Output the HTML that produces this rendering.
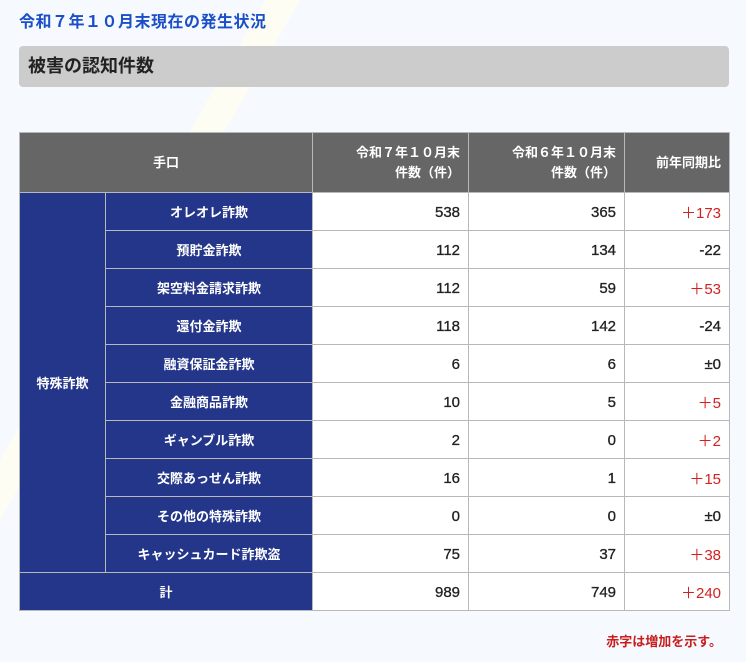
<!DOCTYPE html>
<html><head><meta charset="utf-8"><style>
body{margin:0;width:746px;height:662px;overflow:hidden;background:#f6f9fd;font-family:"Liberation Sans","Noto Sans CJK JP",sans-serif;position:relative}
.stripe{position:absolute;left:0;top:0;width:746px;height:662px;background:linear-gradient(120deg,transparent 0,transparent 230px,#fdfdf3 230px,#fdfdf3 260px,transparent 260px)}
h1{position:absolute;left:19px;top:8px;margin:0;font-size:16px;font-weight:bold;color:#1a4fc7;letter-spacing:0.5px}
.bar{position:absolute;left:19px;top:46px;width:710px;height:41px;background:#cccccc;border-radius:4px;font-size:18px;font-weight:bold;color:#222;line-height:41px;box-sizing:border-box;padding-left:9px}
table{position:absolute;left:19px;top:132px;border-collapse:collapse;width:710px;table-layout:fixed;font-size:14px;font-weight:bold}
td,th{border:1px solid #b8b8b8;padding:0 8px;height:38px;box-sizing:border-box}
th{background:#666;color:#fff;font-size:13px;height:60px;text-align:right;line-height:20px}
th.c{text-align:center}
.n{background:#24368a;color:#fff;text-align:center;font-size:13px}
.v{background:#fff;text-align:right;color:#222;font-size:15px;font-weight:normal;-webkit-text-stroke:0.3px #222;padding-top:2px}
.r{color:#d42020;-webkit-text-stroke:0}
.note{position:absolute;right:24px;top:631px;color:#c81e1e;font-size:13px;font-weight:bold}
</style></head><body>
<div class="stripe"></div>
<h1>令和７年１０月末現在の発生状況</h1>
<div class="bar">被害の認知件数</div>
<table>
<colgroup><col style="width:86px"><col style="width:207px"><col style="width:156px"><col style="width:156px"><col style="width:105px"></colgroup>
<tr><th class="c" colspan="2">手口</th><th>令和７年１０月末<br>件数（件）</th><th>令和６年１０月末<br>件数（件）</th><th>前年同期比</th></tr>
<tr><td class="n" rowspan="10">特殊詐欺</td><td class="n">オレオレ詐欺</td><td class="v">538</td><td class="v">365</td><td class="v r">＋173</td></tr>
<tr><td class="n">預貯金詐欺</td><td class="v">112</td><td class="v">134</td><td class="v">-22</td></tr>
<tr><td class="n">架空料金請求詐欺</td><td class="v">112</td><td class="v">59</td><td class="v r">＋53</td></tr>
<tr><td class="n">還付金詐欺</td><td class="v">118</td><td class="v">142</td><td class="v">-24</td></tr>
<tr><td class="n">融資保証金詐欺</td><td class="v">6</td><td class="v">6</td><td class="v">±0</td></tr>
<tr><td class="n">金融商品詐欺</td><td class="v">10</td><td class="v">5</td><td class="v r">＋5</td></tr>
<tr><td class="n">ギャンブル詐欺</td><td class="v">2</td><td class="v">0</td><td class="v r">＋2</td></tr>
<tr><td class="n">交際あっせん詐欺</td><td class="v">16</td><td class="v">1</td><td class="v r">＋15</td></tr>
<tr><td class="n">その他の特殊詐欺</td><td class="v">0</td><td class="v">0</td><td class="v">±0</td></tr>
<tr><td class="n">キャッシュカード詐欺盗</td><td class="v">75</td><td class="v">37</td><td class="v r">＋38</td></tr>
<tr><td class="n" colspan="2">計</td><td class="v">989</td><td class="v">749</td><td class="v r">＋240</td></tr>
</table>
<div class="note">赤字は増加を示す。</div>
</body></html>
